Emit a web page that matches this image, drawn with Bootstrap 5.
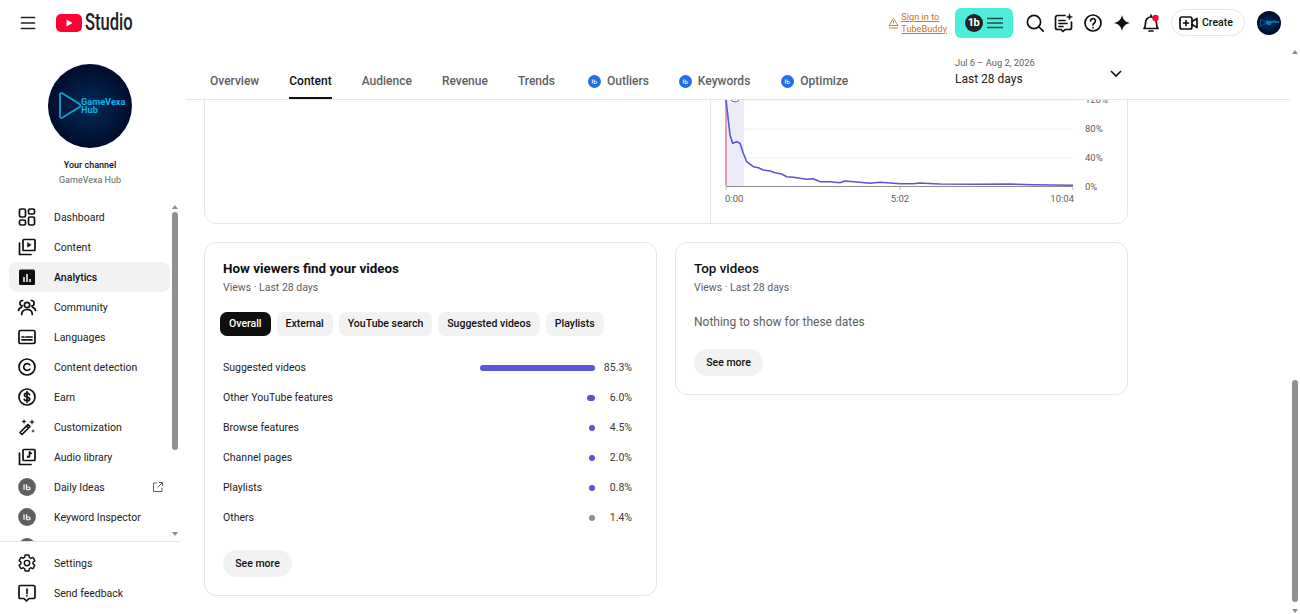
<!DOCTYPE html>
<html lang="en">
<head>
    <meta charset="UTF-8">
    <meta name="viewport" content="width=device-width, initial-scale=1.0">
    <title>Channel analytics - YouTube Studio</title>
    <link href="https://cdn.jsdelivr.net/npm/bootstrap@5.3.0/dist/css/bootstrap.min.css" rel="stylesheet">
    <style>
        html, body { height: 614px; overflow: hidden; }
        body { font-family: Roboto, "Liberation Sans", sans-serif; color: #0f0f0f; background: #fff; font-size: 10.5px; }
        a { color: inherit; text-decoration: none; }
        svg { display: block; flex: none; }
        .line-icon { fill: none; stroke: #0f0f0f; stroke-width: 1.7; stroke-linecap: round; stroke-linejoin: round; }

        .top-bar { height: 45px; padding-left: 16px; padding-right: 19px; }
        .logo-word { font-size: 23px; font-weight: 500; line-height: 1; color: #212121; display: inline-block; transform: scaleX(.72); transform-origin: left center; width: 46px; margin-left: 3px; }
        .logo-mark { margin-left: 16px; }
        .tb-signin { font-size: 9.2px; line-height: 12px; color: #d9700f; text-decoration: underline; margin-left: 2px; }
        .tb-button { width: 58px; height: 30px; background: #4eeddb; border-radius: 6px; margin-left: 8px; margin-right: 12px; }
        .tb-round { width: 18px; height: 18px; background: #222; color: #fff; border-radius: 50%; font-size: 11px; font-weight: 700; line-height: 18px; text-align: center; letter-spacing: -.6px; }
        .header-actions { gap: 9px; }
        .create-btn { width: 74px; height: 27px; border: 1px solid #e5e5e5; border-radius: 14px; font-size: 10.5px; font-weight: 500; margin-left: 10px; margin-right: 12px; padding-left: 7px; gap: 3px; }

        .side-panel { width: 186px; flex: none; }
        .channel-box { height: 157px; padding-top: 19px; padding-right: 6px; }
        .channel-name { font-size: 9px; font-weight: 500; margin-top: 11px; line-height: 12px; }
        .channel-sub { font-size: 9px; color: #606060; margin-top: 3px; line-height: 12px; }
        .side-scroll { height: 340px; width: 180px; border-bottom: 1px solid #e5e5e5; }
        .side-list { width: 170px; overflow: hidden; flex: none; }
        .side-item { height: 30px; margin-left: 9px; padding-left: 8px; padding-top: 1px; gap: 17px; border-radius: 8px; font-size: 10.5px; color: #212121; }
        .side-item > svg { margin-bottom: 2px; }
        .side-item.picked { background: #f2f2f2; font-weight: 500; color: #0f0f0f; }
        .side-item .ext-link { margin-left: auto; margin-right: 6px; }
        .side-foot { padding-top: 6px; }
        .tb-grey { color: #5f5f5f; }
        .tb-blue { color: #1f6fe5; }
        .rail { width: 10px; }
        .rail-up { width: 0; height: 0; border-left: 3.5px solid transparent; border-right: 3.5px solid transparent; border-bottom: 4px solid #8d8d8d; }
        .rail-down { width: 0; height: 0; border-left: 3.5px solid transparent; border-right: 3.5px solid transparent; border-top: 4px solid #8d8d8d; }
        .rail-thumb { width: 6px; background: #909090; border-radius: 3px; }
        .side-rail .rail-up { margin-top: 3px; }
        .side-rail .rail-thumb { height: 238px; margin-top: 3px; }
        .side-rail .rail-down { margin-top: 82px; }
        .page-rail { flex: none; }
        .page-rail .rail-up { margin-top: 5px; }
        .page-rail .rail-thumb { height: 222px; margin-top: 326px; }
        .page-rail .rail-down { margin-top: 7px; }

        .main-col { width: 1104px; flex: none; }
        .tab-bar { height: 55px; border-bottom: 1px solid #e5e5e5; padding-left: 24px; }
        .tab-list { gap: 30px; height: 54px; }
        .tab-link { display: flex; align-items: center; gap: 6px; height: 54px; padding-top: 18px; font-size: 12px; font-weight: 500; color: #606060; }
        .tab-link.picked { color: #0f0f0f; border-bottom: 2px solid #0f0f0f; padding-top: 20px; }
        .tab-first-tool { margin-left: 3px; }
        .tab-last-tool { margin-left: 1px; }
        .date-pick { width: 168px; margin-left: auto; margin-right: 167px; margin-top: 12px; }
        .date-range { font-size: 9.3px; color: #606060; line-height: 12px; }
        .date-label { font-size: 12px; line-height: 20px; color: #212121; }
        .date-chevron { margin-left: auto; margin-top: 1px; }

        .content-clip { height: 514px; overflow: hidden; padding-left: 18px; }
        .panel-box { background: #fff; border: 1px solid #e5e5e5; border-radius: 12px; }
        .reten-box { width: 924px; height: 144px; margin-top: -20px; overflow: hidden; }
        .reten-left { width: 506px; border-right: 1px solid #e5e5e5; flex: none; }
        .chart-text { font-family: Roboto, "Liberation Sans", sans-serif; font-size: 9.5px; fill: #606060; }
        .two-cols { display: grid; grid-template-columns: 453px 453px; column-gap: 18px; margin-top: 18px; width: 924px; align-items: start; }
        .source-box { height: 354px; padding: 18px 24px 0 18px; }
        .top-box { height: 153px; padding: 18px 18px 0 18px; }
        .box-title { font-size: 13.4px; font-weight: 700; line-height: 16px; margin: 0; }
        .top-box .box-title { font-weight: 500; }
        .box-sub { font-size: 10.5px; color: #606060; line-height: 14px; margin-top: 4px; }
        .chip-row { gap: 6px; margin-top: 17px; margin-left: -3px; }
        .chip-btn { height: 24px; padding: 0 9px; font-size: 10.5px; font-weight: 500; border: 0; border-radius: 7px; background: #f2f2f2; color: #0f0f0f; line-height: 24px; }
        .chip-btn.picked { background: #0f0f0f; color: #fff; }
        .source-rows { margin-top: 17px; }
        .source-row { height: 30px; font-size: 10.5px; color: #212121; }
        .source-bar { height: 6px; border-radius: 3px; background: #5b55d6; margin-left: auto; }
        .source-bar.other { background: #909090; }
        .source-val { width: 37px; text-align: right; color: #3a3a3a; }
        .more-btn { display: block; width: 69px; height: 27px; border: 0; border-radius: 14px; background: #f2f2f2; font-size: 10.5px; font-weight: 500; color: #0f0f0f; padding: 0; }
        .source-box .more-btn { margin-top: 17px; }
        .empty-note { font-size: 12px; color: #606060; line-height: 16px; margin-top: 19px; }
        .top-box .more-btn { margin-top: 19px; }
        .svg-defs { position: absolute; }
    </style>
</head>
<body>
    <svg class="svg-defs" width="0" height="0">
        <defs>
            <radialGradient id="avaGlow"><stop offset="0" stop-color="#022a58"/><stop offset="1" stop-color="#000d2c"/></radialGradient>
            <symbol id="ava" viewBox="0 0 84 84">
                <circle cx="42" cy="42" r="42" fill="url(#avaGlow)"/>
                <path d="M12 30.500v22a1.500 1.500 0 0 0 2.300 1.200L31.500 43a1.800 1.800 0 0 0 0-3L14.300 29.300a1.500 1.500 0 0 0-2.300 1.200z" fill="none" stroke="#06a5d2" stroke-width="1.800"/>
                <text x="33" y="41" font-family="Roboto, sans-serif" font-size="9.200" font-weight="700" fill="#05b4e6">GameVexa</text>
                <text x="33" y="49" font-family="Roboto, sans-serif" font-size="9.200" font-weight="700" fill="#05b4e6">Hub</text>
            </symbol>
            <symbol id="tb" viewBox="0 0 18 18">
                <circle cx="9" cy="9" r="9" fill="currentColor"/>
                <path d="M6 6.200v5.600M8.500 6.200v5.600M8.500 9h2.200a1.400 1.400 0 0 1 0 2.800H8.500" fill="none" stroke="#fff" stroke-width="1.200"/>
            </symbol>
        </defs>
    </svg>

    <!-- Top bar -->
    <header class="top-bar d-flex align-items-center">
        <svg width="24" height="24" viewBox="0 0 24 24" class="line-icon"><path d="M5.500 6.500h13M5.500 12h13M5.500 17.500h13" stroke="#212121"/></svg>
        <span class="logo-mark d-flex align-items-center">
            <svg width="26" height="18" viewBox="0 0 26 18"><rect width="26" height="18" rx="5" fill="#ff0033"/><path d="M10.500 5.500v7l6-3.500z" fill="#fff"/></svg>
            <span class="logo-word">Studio</span>
        </span>

        <div class="d-flex align-items-center ms-auto">
            <div class="d-flex align-items-center">
                <svg width="11" height="12" viewBox="0 0 11 12" fill="none" stroke="#d9700f" stroke-width=".9"><path d="M5.500 1.500 1 8.500h9zM5.500 4v2.500M1 11h9"/></svg>
                <a class="tb-signin" href="#">Sign in to<br>TubeBuddy</a>
            </div>
            <div class="tb-button d-flex align-items-center justify-content-center gap-1">
                <span class="tb-round">1b</span>
                <svg width="17" height="12" viewBox="0 0 17 12" fill="none" stroke="#1f4f4a" stroke-width="1.500"><path d="M0 1.500h16M0 6h16M0 10.500h16"/></svg>
            </div>
            <div class="header-actions d-flex align-items-center">
                <svg width="20" height="20" viewBox="0 0 20 20" class="line-icon"><circle cx="9" cy="9" r="6.600"/><path d="m14 14 4.200 4.200"/></svg>
                <svg width="20" height="20" viewBox="0 0 20 20" class="line-icon"><path d="M11 2.500H3.500a2 2 0 0 0-2 2v10a2 2 0 0 0 2 2H7l2 2 2-2h4.500a2 2 0 0 0 2-2V9M5 7.500h6M5 10.500h8M5 13.500h4"/><path d="m15.500 1 .8 2.200 2.200.8-2.200.8-.8 2.200-.8-2.200-2.200-.8 2.200-.8z" fill="#0f0f0f" stroke-width=".5"/></svg>
                <svg width="20" height="20" viewBox="0 0 20 20" class="line-icon"><circle cx="10" cy="10" r="8"/><path d="M7.600 8a2.400 2.400 0 1 1 3.700 2c-.9.600-1.300 1-1.300 2"/><path d="M10 14.700v.1"/></svg>
                <svg width="20" height="20" viewBox="0 0 20 20"><path d="M10 2c.9 4.600 3.200 7 8 8-4.800 1-7.100 3.400-8 8-.9-4.600-3.200-7-8-8 4.800-1 7.100-3.400 8-8z" fill="#0f0f0f"/></svg>
                <svg width="20" height="20" viewBox="0 0 20 20" class="line-icon"><path d="M3 15.500c1.500-1.500 1.500-3 1.500-5.500C4.500 6.500 7 4 10 4s5.500 2.500 5.500 6c0 2.500 0 4 1.500 5.500zM8 18h4M10 2v2"/><circle cx="14.500" cy="5" r="3.200" fill="#f03" stroke="none"/></svg>
            </div>
            <a class="create-btn d-flex align-items-center" href="#">
                <svg width="20" height="16" viewBox="0 0 20 16" class="line-icon"><rect x="1" y="2" width="12" height="12" rx="2"/><path d="m13 6.500 5-3v9l-5-3M7 5.500v5M4.500 8h5"/></svg>
                <span>Create</span>
            </a>
            <svg width="24" height="24"><use href="#ava"/></svg>
        </div>
    </header>

    <div class="d-flex">
        <!-- Sidebar -->
        <aside class="side-panel">
            <div class="channel-box d-flex flex-column align-items-center">
                <svg width="84" height="84"><use href="#ava"/></svg>
                <div class="channel-name">Your channel</div>
                <div class="channel-sub">GameVexa Hub</div>
            </div>

            <div class="side-scroll d-flex">
                <nav class="side-list">
                    <a class="side-item d-flex align-items-center" href="#">
                        <svg width="20" height="20" viewBox="0 0 20 20" class="line-icon"><rect x="2.500" y="2" width="6" height="8" rx="1.500"/><rect x="11.500" y="2" width="6" height="5" rx="1.500"/><rect x="2.500" y="13" width="6" height="5" rx="1.500"/><rect x="11.500" y="10" width="6" height="8" rx="1.500"/></svg>
                        Dashboard
                    </a>
                    <a class="side-item d-flex align-items-center" href="#">
                        <svg width="20" height="20" viewBox="0 0 20 20" class="line-icon"><rect x="6" y="2.500" width="12" height="11" rx=".8"/><path d="M2.500 6v11.500H14"/><path d="M10.500 5.800v4.400l3.500-2.200z" fill="#0f0f0f" stroke-width=".5"/></svg>
                        Content
                    </a>
                    <a class="side-item picked d-flex align-items-center" href="#">
                        <svg width="20" height="20" viewBox="0 0 20 20"><rect x="2" y="2.500" width="16" height="15.500" rx="1.500" fill="#0f0f0f"/><path d="M7 10v5M10 7v8M13 12v3" stroke="#fff" stroke-width="1.500"/></svg>
                        Analytics
                    </a>
                    <a class="side-item d-flex align-items-center" href="#">
                        <svg width="20" height="20" viewBox="0 0 20 20" class="line-icon"><circle cx="10" cy="8" r="2.700"/><path d="M4.700 17.500c0-3.200 2-5 5.300-5s5.300 1.800 5.300 5M5.500 9a2.300 2.300 0 0 1 .3-5.500M1.500 13.500c.3-2 1.300-3 3-3.200M14.500 9a2.300 2.300 0 0 0-.3-5.500M18.500 13.500c-.3-2-1.300-3-3-3.200"/></svg>
                        Community
                    </a>
                    <a class="side-item d-flex align-items-center" href="#">
                        <svg width="20" height="20" viewBox="0 0 20 20" class="line-icon"><rect x="2" y="3.500" width="16" height="13" rx="1.500"/><path d="M5 12.800h4.500M11 12.800h4M5 10h2M9 10h6"/></svg>
                        Languages
                    </a>
                    <a class="side-item d-flex align-items-center" href="#">
                        <svg width="20" height="20" viewBox="0 0 20 20" class="line-icon"><circle cx="10" cy="10" r="8"/><path d="M12.700 7.800a3.400 3.400 0 1 0 0 4.400"/></svg>
                        Content detection
                    </a>
                    <a class="side-item d-flex align-items-center" href="#">
                        <svg width="20" height="20" viewBox="0 0 20 20" class="line-icon"><circle cx="10" cy="10" r="8"/><path d="M12.600 7.700c-.4-1-1.400-1.500-2.600-1.500-1.500 0-2.600.8-2.600 1.900 0 2.800 5.300 1.100 5.300 3.900 0 1.100-1.200 1.900-2.700 1.900-1.300 0-2.300-.5-2.800-1.600M10 4.700v10.600"/></svg>
                        Earn
                    </a>
                    <a class="side-item d-flex align-items-center" href="#">
                        <svg width="20" height="20" viewBox="0 0 20 20" class="line-icon"><path d="m3 15.500 8-8 2 2-8 8zM9.500 9l2 2"/><path d="m7 2 .7 1.800 1.800.7-1.800.7L7 7l-.7-1.800L4.500 4.500l1.800-.7zM15 2l.7 2.300L18 5l-2.300.7L15 8l-.7-2.300L12 5l2.300-.7zM16 12l.5 1.500 1.500.5-1.500.5L16 16l-.5-1.500L14 14l1.500-.5z" fill="#0f0f0f" stroke="none"/></svg>
                        Customization
                    </a>
                    <a class="side-item d-flex align-items-center" href="#">
                        <svg width="20" height="20" viewBox="0 0 20 20" class="line-icon"><rect x="6" y="2.500" width="12" height="11" rx=".8"/><path d="M2.500 6v11.500H14"/><path d="M12.500 5v4.500"/><circle cx="11.200" cy="9.700" r="1.300" fill="#0f0f0f" stroke="none"/><path d="M12.500 5c.3 1 1 1.300 1.800 1.500"/></svg>
                        Audio library
                    </a>
                    <a class="side-item d-flex align-items-center" href="#">
                        <svg class="tb-grey" width="20" height="20" viewBox="0 0 18 18"><use href="#tb" x="1" y="1" width="16" height="16"/></svg>
                        Daily Ideas
                        <svg class="ext-link" width="12" height="12" viewBox="0 0 12 12" fill="none" stroke="#606060" stroke-width="1"><path d="M5 2H1.500v8.500H10V7M7 1.500h3.500V5M10.500 1.500 5.500 6.500"/></svg>
                    </a>
                    <a class="side-item d-flex align-items-center" href="#">
                        <svg class="tb-grey" width="20" height="20" viewBox="0 0 18 18"><use href="#tb" x="1" y="1" width="16" height="16"/></svg>
                        Keyword Inspector
                    </a>
                    <a class="side-item d-flex align-items-center" href="#">
                        <svg class="tb-grey" width="20" height="20" viewBox="0 0 18 18"><use href="#tb" x="1" y="1" width="16" height="16"/></svg>
                    </a>
                </nav>
                <div class="rail side-rail d-flex flex-column align-items-center">
                    <span class="rail-up"></span>
                    <span class="rail-thumb"></span>
                    <span class="rail-down"></span>
                </div>
            </div>

            <div class="side-foot">
                <a class="side-item d-flex align-items-center" href="#">
                    <svg width="20" height="20" viewBox="0 0 24 24" class="line-icon"><path d="M19.140 12.940c.04-.3.06-.61.06-.94 0-.32-.02-.64-.07-.94l2.030-1.580c.18-.14.23-.41.12-.61l-1.920-3.320c-.12-.22-.37-.29-.59-.22l-2.390.96c-.5-.38-1.030-.7-1.620-.94l-.36-2.540c-.04-.24-.24-.41-.48-.41h-3.840c-.24 0-.43.17-.47.41l-.36 2.540c-.59.24-1.130.57-1.620.94l-2.390-.96c-.22-.08-.47 0-.59.22L2.740 8.870c-.12.21-.08.47.12.61l2.030 1.580c-.05.3-.09.63-.09.94s.02.64.07.94l-2.030 1.580c-.18.14-.23.41-.12.61l1.920 3.320c.12.22.37.29.59.22l2.390-.96c.5.38 1.030.7 1.620.94l.36 2.540c.05.24.24.41.48.41h3.840c.24 0 .44-.17.47-.41l.36-2.540c.59-.24 1.130-.56 1.620-.94l2.390.96c.22.08.47 0 .59-.22l1.920-3.320c.12-.22.07-.47-.12-.61l-2.010-1.580z"/><circle cx="12" cy="12" r="3.200"/></svg>
                    Settings
                </a>
                <a class="side-item d-flex align-items-center" href="#">
                    <svg width="20" height="20" viewBox="0 0 20 20" class="line-icon"><path d="M3.500 2.500h13a1.500 1.500 0 0 1 1.500 1.500v10a1.500 1.500 0 0 1-1.500 1.500H12L9.500 18 7 15.500H3.500A1.500 1.500 0 0 1 2 14V4a1.500 1.500 0 0 1 1.500-1.500zM10 6v4.500M10 12.800v.2"/></svg>
                    Send feedback
                </a>
            </div>
        </aside>

        <!-- Main column -->
        <main class="main-col">
            <div class="tab-bar d-flex align-items-start">
                <nav class="tab-list d-flex">
                    <a class="tab-link" href="#">Overview</a>
                    <a class="tab-link picked" href="#">Content</a>
                    <a class="tab-link" href="#">Audience</a>
                    <a class="tab-link" href="#">Revenue</a>
                    <a class="tab-link" href="#">Trends</a>
                    <a class="tab-link tab-first-tool" href="#"><svg class="tb-blue" width="13" height="13"><use href="#tb"/></svg>Outliers</a>
                    <a class="tab-link" href="#"><svg class="tb-blue" width="13" height="13"><use href="#tb"/></svg>Keywords</a>
                    <a class="tab-link tab-last-tool" href="#"><svg class="tb-blue" width="13" height="13"><use href="#tb"/></svg>Optimize</a>
                </nav>
                <div class="date-pick d-flex align-items-center">
                    <div>
                        <div class="date-range">Jul 6 – Aug 2, 2026</div>
                        <div class="date-label">Last 28 days</div>
                    </div>
                    <svg class="date-chevron" width="14" height="10" viewBox="0 0 14 10" fill="none" stroke="#0f0f0f" stroke-width="1.600"><path d="m2 2 5 5 5-5"/></svg>
                </div>
            </div>

            <div class="content-clip">
                <section class="panel-box reten-box d-flex">
                    <div class="reten-left"></div>
                    <svg width="416" height="142" viewBox="711 81 416 142">
                        <path d="M726 100H1073M726 129H1073M726 157.500H1073" stroke="#f0f0f0" stroke-width="1"/>
                        <rect x="726" y="81" width="18" height="105" fill="#ecebf8"/>
                        <path d="M726 186.500H1073" stroke="#8d8d8d" stroke-width="1"/>
                        <path d="M726 81V186" stroke="#df7da3" stroke-width="1.500"/>
                        <circle cx="735" cy="95" r="8.500" fill="#fff"/>
                        <circle cx="735" cy="96" r="6" fill="#fff" stroke="#606060" stroke-width="1"/>
                        <path d="M726 100 730 135 732.700 143.300 736.700 141.700 740 143.300 743.300 153.300 746.700 161.700 753.300 166.700 758.300 167.700 763.300 170 770 171 775 172.700 781.700 174 786.700 176.700 793.300 177.300 806.700 179.300 813.300 178.700 820 181.700 830 181.700 840 182.700 845 181 856.700 182 870 183.300 880 182.300 900 183.700 913.300 183.700 920 183 933.300 183.700 940 184 976.700 184.300 1010 184 1033.300 184.700 1073 185.300" fill="none" stroke="#5b55d6" stroke-width="1.600" stroke-linejoin="round"/>
                        <path d="M726 187v3M900 187v3M1073 187v3" stroke="#bdbdbd" stroke-width="1"/>
                        <text class="chart-text" x="1085" y="103">120%</text>
                        <text class="chart-text" x="1085" y="132">80%</text>
                        <text class="chart-text" x="1085" y="161">40%</text>
                        <text class="chart-text" x="1085" y="190">0%</text>
                        <text class="chart-text" x="725" y="202">0:00</text>
                        <text class="chart-text" x="900" y="202" text-anchor="middle">5:02</text>
                        <text class="chart-text" x="1074" y="202" text-anchor="end">10:04</text>
                    </svg>
                </section>

                <div class="two-cols">
                    <section class="panel-box source-box">
                        <h2 class="box-title">How viewers find your videos</h2>
                        <div class="box-sub">Views · Last 28 days</div>
                        <div class="chip-row d-flex">
                            <button class="chip-btn picked">Overall</button>
                            <button class="chip-btn">External</button>
                            <button class="chip-btn">YouTube search</button>
                            <button class="chip-btn">Suggested videos</button>
                            <button class="chip-btn">Playlists</button>
                        </div>
                        <div class="source-rows" id="sourceRows"></div>
                        <button class="more-btn">See more</button>
                    </section>

                    <section class="panel-box top-box">
                        <h2 class="box-title">Top videos</h2>
                        <div class="box-sub">Views · Last 28 days</div>
                        <div class="empty-note">Nothing to show for these dates</div>
                        <button class="more-btn">See more</button>
                    </section>
                </div>
            </div>
        </main>

        <div class="rail page-rail d-flex flex-column align-items-center">
            <span class="rail-up"></span>
            <span class="rail-thumb"></span>
            <span class="rail-down"></span>
        </div>
    </div>

    <script src="https://cdn.jsdelivr.net/npm/bootstrap@5.3.0/dist/js/bootstrap.bundle.min.js"></script>
    <script>
        const sources = [
            ["Suggested videos", 115, "85.3%"],
            ["Other YouTube features", 8, "6.0%"],
            ["Browse features", 6, "4.5%"],
            ["Channel pages", 6, "2.0%"],
            ["Playlists", 6, "0.8%"],
            ["Others", 6, "1.4%", true]
        ];
        document.getElementById("sourceRows").innerHTML = sources.map(s => `
            <div class="source-row d-flex align-items-center">
                <span>${s[0]}</span>
                <div class="source-bar ${s[3] ? "other" : ""}" style="width:${s[1]}px"></div>
                <span class="source-val">${s[2]}</span>
            </div>`).join("");
    </script>
</body>
</html>
